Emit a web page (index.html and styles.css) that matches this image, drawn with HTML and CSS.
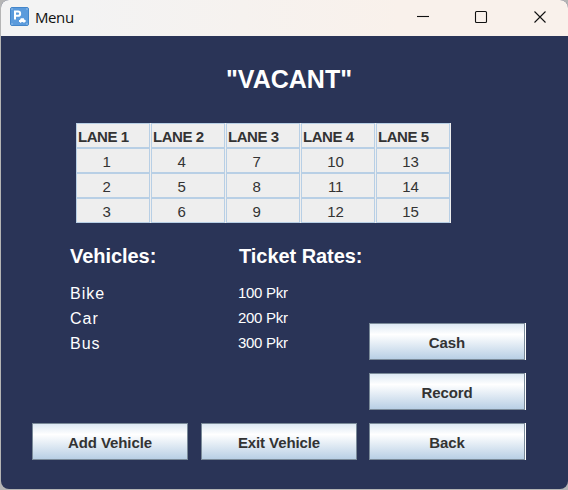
FILE: index.html
```html
<!DOCTYPE html>
<html lang="en">
<head>
<meta charset="utf-8">
<title>Menu</title>
<link rel="stylesheet" href="styles.css">
</head>
<body>
<div class="window">
  <header class="titlebar">
    <svg class="app-icon" width="19" height="19" viewBox="0 0 19 19">
      <rect x=".5" y=".5" width="18" height="18" rx="1.500" fill="#5b9bdc" stroke="#4486ca"/>
      <path d="M1.500 1.500h1v1h-1zM16.500 1.500h1v1h-1zM1.500 16.500h1v1h-1zM16.500 16.500h1v1h-1z" fill="#cfe3f6"/>
      <path d="M5 12.500V4.500H8a2.100 2.100 0 0 1 0 4.300H5" fill="none" stroke="#fff" stroke-width="2"/>
      <path d="M9 13h1l.8-1.800h3l.8 1.800h1v2h-1v.8h-1.300V15h-2v.8H10V15H9z" fill="#fff"/>
    </svg>
    <span class="caption">Menu</span>
    <svg class="controls" width="136" height="20" viewBox="0 0 136 20" fill="none" stroke="#111" stroke-width="1.100">
      <path d="M0 8.500h12"/>
      <rect x="58.500" y="3.500" width="11" height="11" rx="1"/>
      <path d="M117.500 3.500l11 11m0-11l-11 11"/>
    </svg>
  </header>
  <main class="content">
    <h1 class="title"><span>"VACANT"</span></h1>
    <div class="lanes">
      <b>LANE 1</b><b>LANE 2</b><b>LANE 3</b><b>LANE 4</b><b>LANE 5</b>
      <span>1</span><span>4</span><span>7</span><span>10</span><span>13</span>
      <span>2</span><span>5</span><span>8</span><span>11</span><span>14</span>
      <span>3</span><span>6</span><span>9</span><span>12</span><span>15</span>
    </div>
    <div class="rates">
      <h2>Vehicles:</h2><h2>Ticket Rates:</h2>
      <span class="vehicle">Bike</span><span class="rate">100 Pkr</span>
      <span class="vehicle">Car</span><span class="rate">200 Pkr</span>
      <span class="vehicle">Bus</span><span class="rate">300 Pkr</span>
    </div>
    <div class="actions">
      <button class="cash edge">Cash</button>
      <button class="record edge">Record</button>
      <button class="add">Add Vehicle</button>
      <button class="exit">Exit Vehicle</button>
      <button class="back edge">Back</button>
    </div>
  </main>
</div>
</body>
</html>
```
FILE: styles.css
```css
* { box-sizing: border-box; }
body { margin: 0; background: #b5b5b5; font-family: "Liberation Sans", Arial, sans-serif; overflow: hidden; }
.window { width: 567px; height: 489px; margin-left: 1px; border-radius: 8px; overflow: hidden; background: #2a3457; }
.titlebar { height: 36px; display: flex; align-items: flex-start; background: linear-gradient(90deg, #f3f3f3 15%, #f9f1eb 70%); }
.app-icon { margin: 7px 0 0 9px; }
.caption { margin: 7px 0 0 6px; font: 15px/20px "Open Sans", sans-serif; letter-spacing: -.4px; color: #111; }
.controls { margin: 8px 15px 0 auto; }
.content { color: #fff; }
.title { margin: 0; padding: 28px 0 0 225px; height: 87px; font-size: 25px; line-height: 30px; }
.lanes { display: grid; grid-template-columns: repeat(5, 75px); grid-auto-rows: 25px; width: 375px; margin-left: 75px; background: #eee; color: #333; font-size: 15px; line-height: 25px; }
.lanes > * { border: 1px solid #b8cfe5; margin-right: 1px; }
.lanes b { padding-left: 1px; letter-spacing: -.45px; }
.lanes span { text-align: center; padding-right: 13px; letter-spacing: -.2px; }
.lanes span:nth-child(5n+4), .lanes span:nth-child(5n+5) { padding-right: 5px; }
.rates { display: grid; grid-template-columns: 168px 200px; grid-template-rows: 47px repeat(3, 25px); margin: 10px 0 0 69px; line-height: 27px; }
.rates h2 { margin: 10px 0 0; font-size: 20px; line-height: 26px; letter-spacing: -.05px; }
.rates h2 + h2 { padding-left: 1px; }
.vehicle { font-size: 16px; letter-spacing: 1px; }
.rate { font-size: 15px; letter-spacing: -.3px; line-height: 25px; }
.actions { display: grid; grid-template-columns: 156px 156px 157px; grid-auto-rows: 37px; gap: 13px; margin: -32px 0 0 31px; }
.cash, .record { grid-column: 3; }
button { padding: 2px 0 0; border: 1px solid #7a8a99; background: linear-gradient(#dde8f3, #fff 30%, #b8cfe5); color: #333; font: bold 15px "Liberation Sans", Arial, sans-serif; letter-spacing: -.1px; }
.edge { margin: 0 2px 0 -1px; box-shadow: 1px 0 #fff; }
```
